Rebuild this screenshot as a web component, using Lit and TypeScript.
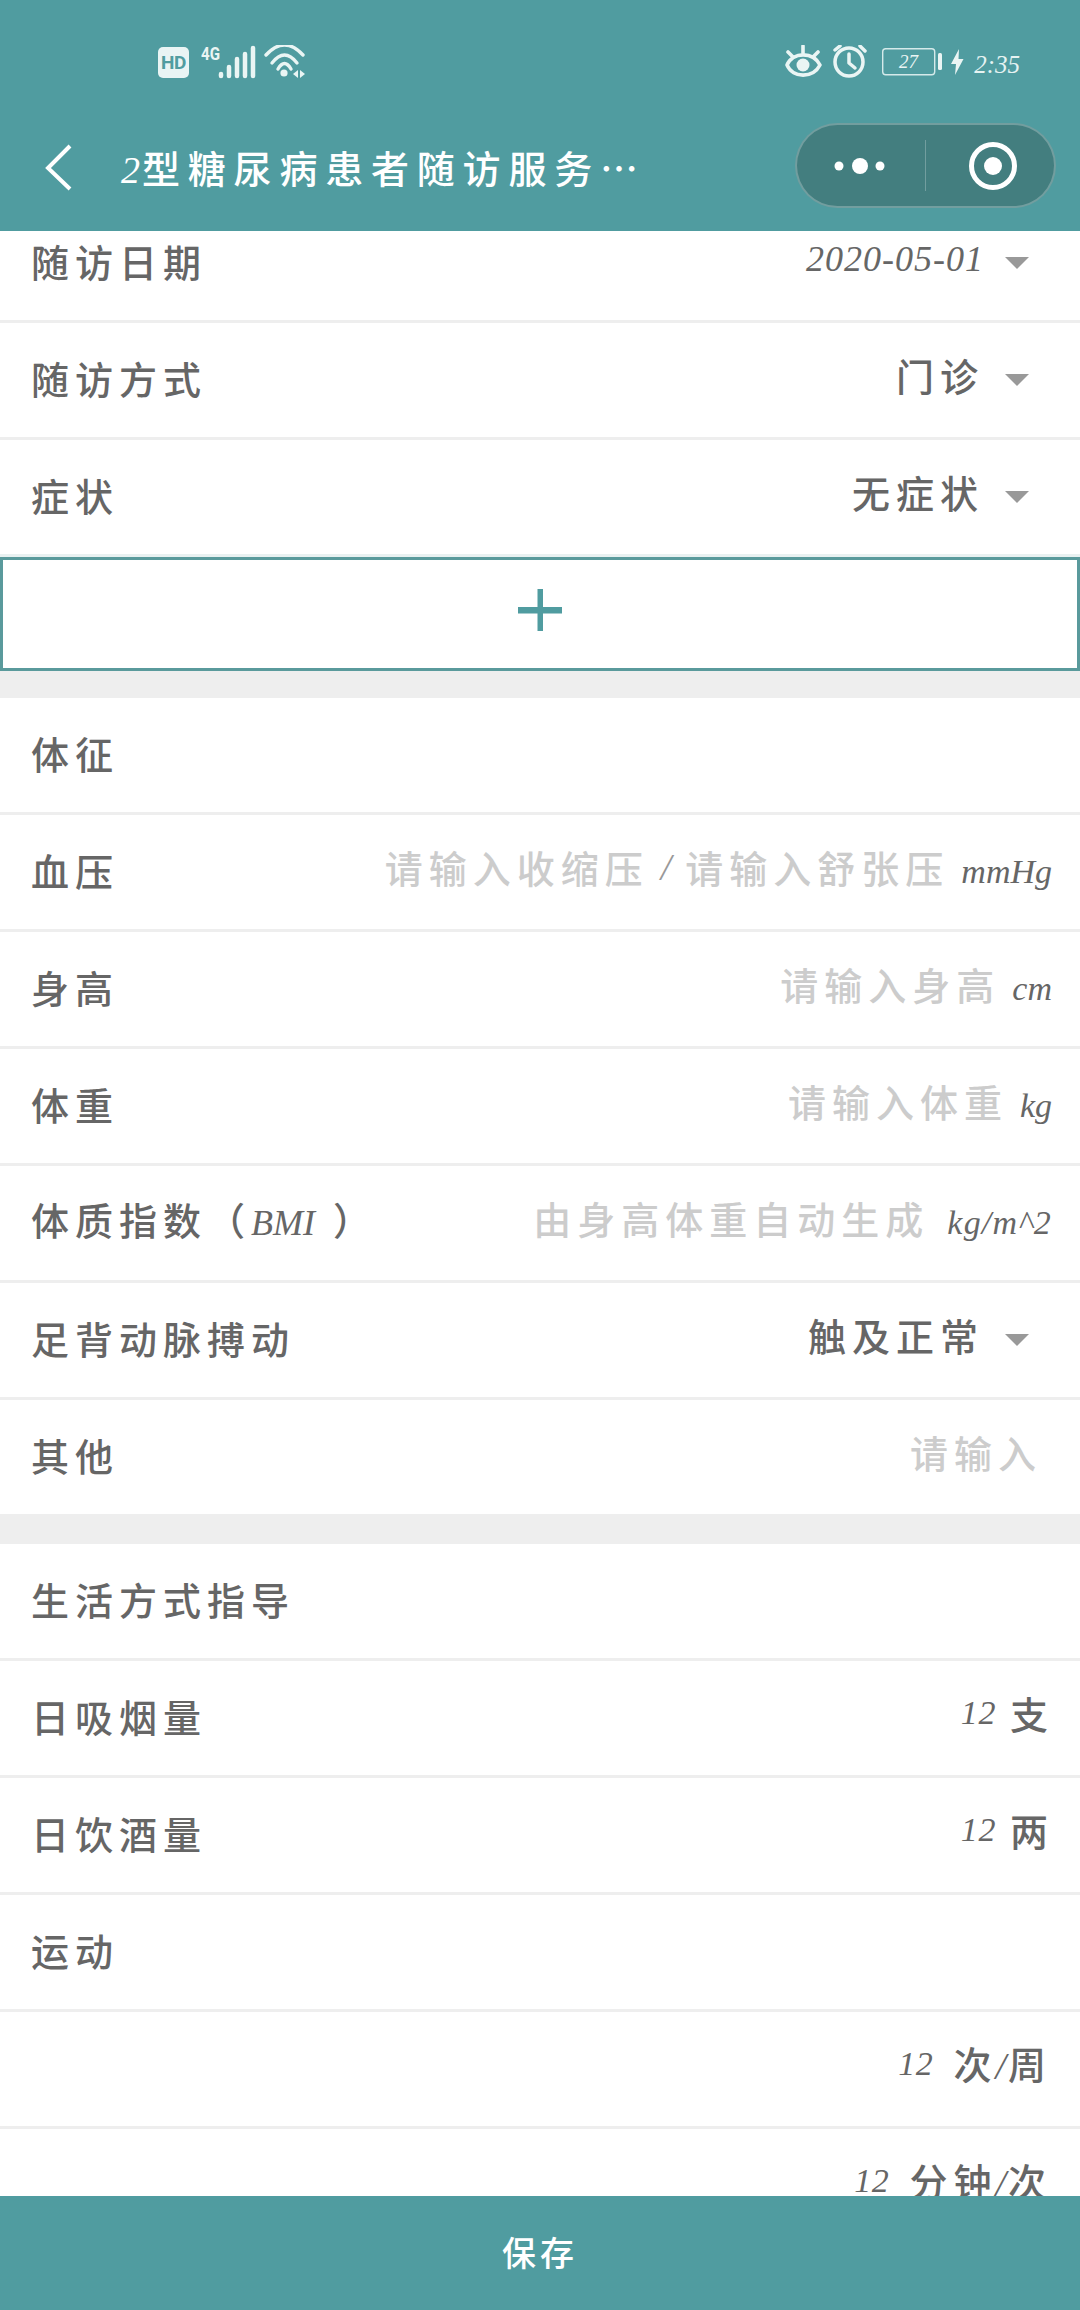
import { LitElement, html, css, TemplateResult } from 'lit';
import { customElement } from 'lit/decorators.js';

type Row = { label: TemplateResult | string; value?: TemplateResult | string; caret?: boolean };

const num = (s: string) => html`<span class="num">${s}</span>`;
const count = (s: string) => html`<span class="count">${s}</span>`;
const unit = (s: string) => html`<span class="unit">${s}</span>`;
const ph = (s: string) => html`<span class="ph">${s}</span>`;

const visitRows: Row[] = [
  { label: '随访日期', value: num('2020-05-01'), caret: true },
  { label: '随访方式', value: '门诊', caret: true },
  { label: '症状', value: '无症状', caret: true },
];

const signRows: Row[] = [
  { label: '体征' },
  { label: '血压', value: html`${ph('请输入收缩压')}<span class="slash">/</span>${ph('请输入舒张压')}${unit('mmHg')}` },
  { label: '身高', value: html`${ph('请输入身高')}${unit('cm')}` },
  { label: '体重', value: html`${ph('请输入体重')}${unit('kg')}` },
  {
    label: html`体质指数（<span class="bmi">BMI</span>）`,
    value: html`${ph('由身高体重自动生成')}<span class="unit wide">kg/m^2</span>`,
  },
  { label: '足背动脉搏动', value: '触及正常', caret: true },
  { label: '其他', value: html`<span class="ph only">请输入</span>` },
];

const lifeRows: Row[] = [
  { label: '生活方式指导' },
  { label: '日吸烟量', value: html`${count('12')}<span class="after-num">支</span>` },
  { label: '日饮酒量', value: html`${count('12')}<span class="after-num">两</span>` },
  { label: '运动' },
  { label: '', value: html`${count('12')}<span class="after-num inset">次<span class="slash dark">/</span>周</span>` },
  { label: '', value: html`${count('12')}<span class="after-num inset">分钟<span class="slash dark">/</span>次</span>` },
];

@customElement('app-root')
export class AppRoot extends LitElement {
  static styles = css`
    :host {
      display: flex;
      flex-direction: column;
      width: 1080px;
      height: 2310px;
      overflow: hidden;
      background: #fff;
      font-family: "Noto Sans CJK SC", "Noto Sans", sans-serif;
      color: #666;
    }

    .head {
      height: 231px;
      flex: none;
      background: #509ca0;
      color: #fff;
    }
    .status {
      display: flex;
      justify-content: space-between;
      height: 123px;
      padding: 45px 60px 0 158px;
      box-sizing: border-box;
    }
    .status-left,
    .status-right {
      display: flex;
      align-items: flex-start;
      height: 34px;
    }
    .hd {
      width: 31px;
      height: 31px;
      margin-top: 2px;
      border-radius: 5px;
      background: #e9f4f4;
      color: #509ca0;
      font: 700 19px/31px "Roboto", sans-serif;
      text-align: center;
      letter-spacing: -0.5px;
    }
    .sig {
      display: block;
      margin-left: 12px;
    }
    .wifi {
      display: block;
      margin-left: -32px;
    }
    .bolt {
      display: block;
      margin-left: 7px;
    }
    .clock {
      margin-left: 10px;
      margin-top: 7px;
      font: italic 25px/26px "Liberation Serif", serif;
      color: #e6f3f2;
    }

    .nav {
      display: flex;
      align-items: flex-start;
      height: 85px;
      padding: 0 24px 0 45px;
    }
    .back {
      display: block;
      margin-top: 20px;
    }
    .title {
      margin-left: 46px;
      margin-top: 19px;
      font-size: 38px;
      line-height: 50px;
      font-weight: 500;
      letter-spacing: 7.8px;
      white-space: nowrap;
    }
    .title .n {
      font: italic 38px/50px "Liberation Serif", serif;
      letter-spacing: 2px;
    }
    .capsule {
      display: flex;
      align-items: center;
      width: 261px;
      height: 85px;
      margin-left: auto;
      box-sizing: border-box;
      border: 2px solid rgba(255, 255, 255, 0.25);
      border-radius: 43px;
      background: #437e7f;
    }

    .scroll {
      flex: 1;
      min-height: 0;
      overflow: hidden;
    }
    .content {
      margin-top: -25px;
    }
    .row {
      display: flex;
      align-items: center;
      justify-content: space-between;
      height: 114px;
      padding: 0 28px 0 31px;
      border-bottom: 3px solid #eee;
      font-size: 38px;
      font-weight: 500;
      line-height: 50px;
      letter-spacing: 6px;
      white-space: nowrap;
    }
    .row.end {
      border-bottom: none;
    }
    .label {
      display: block;
      margin-bottom: 4px;
    }
    .value {
      display: flex;
      align-items: center;
      margin-bottom: 10px;
    }
    .num {
      font: italic 36px/50px "Liberation Serif", serif;
      letter-spacing: 1px;
      margin-top: 2px;
    }
    .count {
      font: italic 34px/50px "Liberation Serif", serif;
      letter-spacing: 0.6px;
      margin-top: -1px;
    }
    .unit {
      font: italic 34px/50px "Liberation Serif", serif;
      letter-spacing: 0;
      margin-left: 12px;
      margin-top: 9px;
    }
    .unit.wide {
      letter-spacing: 1.2px;
      margin-left: 18px;
    }
    .ph {
      color: #ccc;
    }
    .ph.only {
      margin-right: 10px;
    }
    .slash {
      font: italic 38px/50px "Liberation Serif", serif;
      font-weight: 400;
      color: #999;
      letter-spacing: 0;
      margin: 0 14px 0 12px;
    }
    .slash.dark {
      color: #666;
      margin: 0 2px 0 -2px;
    }
    .bmi {
      font: italic 36px/50px "Liberation Serif", serif;
      letter-spacing: 0;
      margin-right: 18px;
    }
    .after-num {
      margin-left: 14px;
      margin-right: -2px;
    }
    .after-num.inset {
      margin-left: 20px;
      margin-right: 0;
    }
    .caret {
      width: 0;
      height: 0;
      margin: 10px 23px 0 21px;
      border-left: 12px solid transparent;
      border-right: 12px solid transparent;
      border-top: 12px solid #999;
    }

    .tint {
      height: 3px;
      background: #e9f1f1;
    }
    .add {
      display: flex;
      align-items: center;
      justify-content: center;
      height: 114px;
      padding-bottom: 8px;
      box-sizing: border-box;
      border: 3px solid #5a9a9c;
    }
    .gap-a {
      height: 27px;
      background: #eee;
    }
    .gap-b {
      height: 30px;
      background: #eee;
    }

    .save {
      flex: none;
      height: 114px;
      background: #509ca0;
      color: #fff;
      font-size: 34px;
      font-weight: 500;
      line-height: 112px;
      letter-spacing: 4px;
      text-align: center;
    }
  `;

  private renderRows(rows: Row[], lastEnd: boolean) {
    return rows.map(
      (r, i) => html`
        <div class="row ${lastEnd && i === rows.length - 1 ? 'end' : ''}">
          <span class="label">${r.label}</span>
          ${r.value
            ? html`<span class="value">${r.value}${r.caret ? html`<span class="caret"></span>` : ''}</span>`
            : ''}
        </div>
      `
    );
  }

  render() {
    return html`
      <div class="head">
        <div class="status">
          <div class="status-left">
            <div class="hd">HD</div>
            <svg class="sig" width="92" height="36" viewBox="0 0 92 36" fill="none">
              <text x="0" y="15" font-family="Roboto, sans-serif" font-size="18" font-weight="700" fill="#eaf5f4" textLength="19" lengthAdjust="spacingAndGlyphs">4G</text>
              <g stroke="#eaf5f4" stroke-width="4.5" stroke-linecap="round">
                <line x1="20" y1="29" x2="20" y2="31" />
                <line x1="28" y1="22" x2="28" y2="31" />
                <line x1="36" y1="14" x2="36" y2="31" />
                <line x1="44" y1="9" x2="44" y2="31" />
                <line x1="52" y1="3" x2="52" y2="31" />
              </g>
            </svg>
            <svg class="wifi" width="50" height="36" viewBox="130 45 50 36" fill="none">
              <g stroke="#eaf5f4" stroke-width="3.4" stroke-linecap="round">
                <path d="M135 55 Q153.5 35 172 55" />
                <path d="M141 63 Q153.5 47 166 63" />
                <path d="M147 69 Q153.5 58 160 69" />
              </g>
              <circle cx="153" cy="73" r="3.6" fill="#eaf5f4" />
              <path d="M167 70 L162 74 L167 78 Z M169 70 L174 74 L169 78 Z" fill="#eaf5f4" />
            </svg>
          </div>
          <div class="status-right">
            <svg width="159" height="36" viewBox="785 45 159 36" fill="none">
              <g stroke="#eaf5f4" stroke-width="3.6" stroke-linecap="round" stroke-linejoin="round">
                <path d="M787 65 C793 51.500 813 51.500 820 65 C813 78.500 793 78.500 787 65 Z" />
                <path d="M803 46 V53 M788 52 L793 57 M818 52 L813 57" />
              </g>
              <circle cx="803" cy="65" r="6.500" fill="#eaf5f4" />
              <g stroke="#eaf5f4" stroke-width="3.500" stroke-linecap="round" stroke-linejoin="round">
                <circle cx="849" cy="62" r="14" />
                <path d="M849 54 V63 L855 68" />
                <path d="M835 50 L840 46 M860 46 L865 51" />
              </g>
              <rect x="882.7" y="48.7" width="52" height="26" rx="3" stroke="#d5eaea" stroke-width="1.4" />
              <text x="908.5" y="68" text-anchor="middle" font-family="Liberation Serif, serif" font-style="italic" font-size="19" fill="#eaf5f4">27</text>
              <rect x="938" y="53" width="4" height="17" rx="1.500" fill="#eaf5f4" />
            </svg>
            <svg class="bolt" width="13" height="31" viewBox="0 0 13 31">
              <path d="M8 4 L0 19 H5 L4 30 L12.500 14 H7.500 Z" fill="#eaf5f4" />
            </svg>
            <span class="clock">2:35</span>
          </div>
        </div>
        <div class="nav">
          <svg class="back" width="30" height="50" viewBox="0 0 30 50" fill="none">
            <path d="M25 3 L3 25 L25 46" stroke="#fff" stroke-width="4" />
          </svg>
          <div class="title"><span class="n">2</span>型糖尿病患者随访服务…</div>
          <div class="capsule">
            <svg width="257" height="81" viewBox="797 125 257 81">
              <circle cx="839" cy="166" r="4.500" fill="#fff" />
              <circle cx="860" cy="166" r="8" fill="#fff" />
              <circle cx="880" cy="166" r="4.500" fill="#fff" />
              <line x1="925.500" y1="140" x2="925.500" y2="191" stroke="#fff" stroke-opacity=".25" />
              <circle cx="993" cy="166" r="21.500" fill="none" stroke="#fff" stroke-width="5" />
              <circle cx="993" cy="166" r="9" fill="#fff" />
            </svg>
          </div>
        </div>
      </div>

      <div class="scroll">
        <div class="content">
          ${this.renderRows(visitRows, true)}
          <div class="tint"></div>
          <div class="add">
            <svg width="44" height="42" viewBox="0 0 44 42">
              <rect x="0" y="18" width="44" height="6.500" fill="#509ca0" />
              <rect x="19.500" y="0" width="5.500" height="42" fill="#509ca0" />
            </svg>
          </div>
          <div class="gap-a"></div>
          ${this.renderRows(signRows, true)}
          <div class="gap-b"></div>
          ${this.renderRows(lifeRows, false)}
        </div>
      </div>

      <div class="save">保存</div>
    `;
  }
}
